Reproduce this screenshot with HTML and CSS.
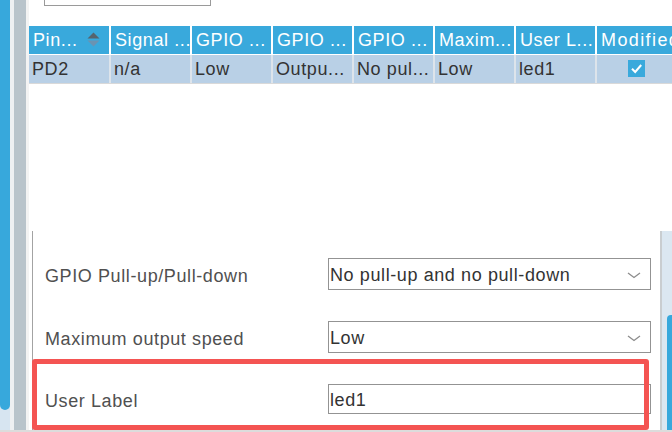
FILE: index.html
```html
<!DOCTYPE html>
<html>
<head>
<meta charset="utf-8">
<link rel="stylesheet" href="styles.css">
</head>
<body>
<div class="app">
  <div class="rail">
    <div class="rail-track"><div class="rail-thumb"></div></div>
    <div class="rail-gap"></div>
    <div class="rail-gray"></div>
    <div class="rail-edge"></div>
  </div>
  <div class="main">
    <div class="toolbar">
      <div class="tool-btn"><span>Sort (None)</span></div>
    </div>
    <div class="grid thead">
      <div class="th sortable">Pin...
        <svg class="sort-ico" width="13" height="17" viewBox="0 0 13 17"><path d="M0.5 7.5 L6.5 1.5 L12.5 7.5 Z" fill="#56646e"/><path d="M0.5 9.5 L6.5 15.5 L12.5 9.5 Z" fill="#6a93b2"/></svg>
      </div>
      <div class="th">Signal ...</div>
      <div class="th">GPIO ...</div>
      <div class="th">GPIO ...</div>
      <div class="th">GPIO ...</div>
      <div class="th">Maxim...</div>
      <div class="th">User L...</div>
      <div class="th wide">Modified</div>
    </div>
    <div class="grid trow">
      <div class="td">PD2</div>
      <div class="td">n/a</div>
      <div class="td">Low</div>
      <div class="td">Outpu...</div>
      <div class="td">No pul...</div>
      <div class="td">Low</div>
      <div class="td">led1</div>
      <div class="td check-cell">
        <span class="check"><svg width="17" height="17" viewBox="0 0 17 17"><path d="M4 8.8 L7.2 12 L13.2 5" fill="none" stroke="#fff" stroke-width="2"/></svg></span>
      </div>
    </div>
    <div class="spacer"></div>
    <div class="lower">
      <div class="panel">
        <div class="prow">
          <div class="plabel">GPIO Pull-up/Pull-down</div>
          <div class="select"><span>No pull-up and no pull-down</span>
            <svg class="chev" width="14" height="7" viewBox="0 0 14 7"><path d="M1 1 L7 5.5 L13 1" fill="none" stroke="#8c8c8c" stroke-width="1.3"/></svg>
          </div>
        </div>
        <div class="prow">
          <div class="plabel">Maximum output speed</div>
          <div class="select"><span>Low</span>
            <svg class="chev" width="14" height="7" viewBox="0 0 14 7"><path d="M1 1 L7 5.5 L13 1" fill="none" stroke="#8c8c8c" stroke-width="1.3"/></svg>
          </div>
        </div>
        <div class="prow">
          <div class="plabel">User Label</div>
          <div class="input">led1</div>
        </div>
      </div>
      <div class="vscroll"><div class="vthumb"></div></div>
      <div class="highlight"></div>
    </div>
  </div>
</div>
<div class="statusline"></div>
</body>
</html>
```

FILE: styles.css
```css
* { box-sizing: border-box; }
html, body { margin: 0; padding: 0; }
body {
  width: 672px;
  height: 432px;
  overflow: hidden;
  background: #fff;
  font-family: "Liberation Sans", Arial, sans-serif;
  font-size: 18px;
  letter-spacing: 0.6px;
}
.app {
  display: flex;
  height: 430px;
}
.rail {
  display: flex;
  width: 29px;
  flex: none;
}
.rail-track {
  width: 10px;
  background: #d7e5f1;
  display: flex;
  flex-direction: column;
}
.rail-thumb {
  height: 410px;
  background: #37a8dc;
  border-radius: 0 0 5px 5px;
}
.rail-gap { width: 4px; background: #eef0f2; }
.rail-gray { width: 12px; background: #b9c4cb; }
.rail-edge { width: 3px; background: #f3f3f3; }

.main {
  flex: 1;
  display: flex;
  flex-direction: column;
  min-width: 0;
}
.toolbar {
  height: 26px;
  flex: none;
  padding-left: 15px;
}
.tool-btn {
  width: 167px;
  height: 26px;
  margin-top: -20px;
  border: 1px solid #9a9a9a;
  color: #444;
  display: flex;
  align-items: flex-end;
  justify-content: center;
  padding-bottom: 9px;
  font-size: 18px;
}
.grid {
  display: grid;
  grid-template-columns: 80px 79px 79px 79px 79px 79px 79px 1fr;
  column-gap: 2px;
}
.thead {
  height: 28px;
  background: #fff;
  margin-bottom: 1px;
}
.th {
  background: #39a9dc;
  color: #fff;
  padding-left: 4px;
  line-height: 29px;
  white-space: nowrap;
  overflow: hidden;
  letter-spacing: 0.6px;
}
.th.wide {
  letter-spacing: 1.4px;
}
.sortable {
  position: relative;
}
.sort-ico {
  position: absolute;
  left: 58px;
  top: 5px;
}
.trow {
  height: 29px;
  background: #dde4eb;
  border-bottom: 1px solid #d9d9d9;
}
.td {
  background: #b9d0e6;
  color: #333;
  padding-left: 3px;
  line-height: 29px;
  white-space: nowrap;
  overflow: hidden;
}
.td.check-cell {
  display: flex;
  align-items: center;
  padding-left: 31px;
  padding-bottom: 1px;
}
.check {
  width: 17px;
  height: 17px;
  background: #39a9dc;
  display: block;
}
.check svg { display: block; }
.spacer {
  flex: 1;
}
.lower {
  height: 199px;
  flex: none;
  display: flex;
  margin-left: 3px;
  position: relative;
}
.panel {
  flex: 1;
  border-left: 1px solid #a3a3a3;
  border-right: 2px solid #c9cdd0;
  padding: 27px 9px 0 12px;
  display: flex;
  flex-direction: column;
  gap: 31px;
}
.prow {
  display: grid;
  grid-template-columns: 1fr 323px;
  align-items: center;
}
.plabel {
  color: #505050;
  padding-top: 4px;
}
.select {
  height: 32px;
  border: 1px solid #939393;
  display: flex;
  align-items: center;
  justify-content: space-between;
  padding: 3px 9px 0 1px;
  color: #333;
}
.input {
  height: 30px;
  border: 1px solid #939393;
  display: flex;
  align-items: center;
  padding: 3px 0 0 1px;
  color: #333;
}
.vscroll {
  width: 10px;
  background: #dbe7f1;
  display: flex;
  flex-direction: column;
  align-items: flex-end;
  justify-content: flex-end;
}
.vthumb {
  width: 5px;
  height: 115px;
  background: #37a8dc;
  border-radius: 4px 0 0 0;
}
.highlight {
  position: absolute;
  left: 0;
  top: 128px;
  width: 617px;
  height: 71px;
  border: 5px solid #f45452;
  border-radius: 3px;
  pointer-events: none;
}
.statusline {
  height: 2px;
  background: #dcdcdc;
}
```
